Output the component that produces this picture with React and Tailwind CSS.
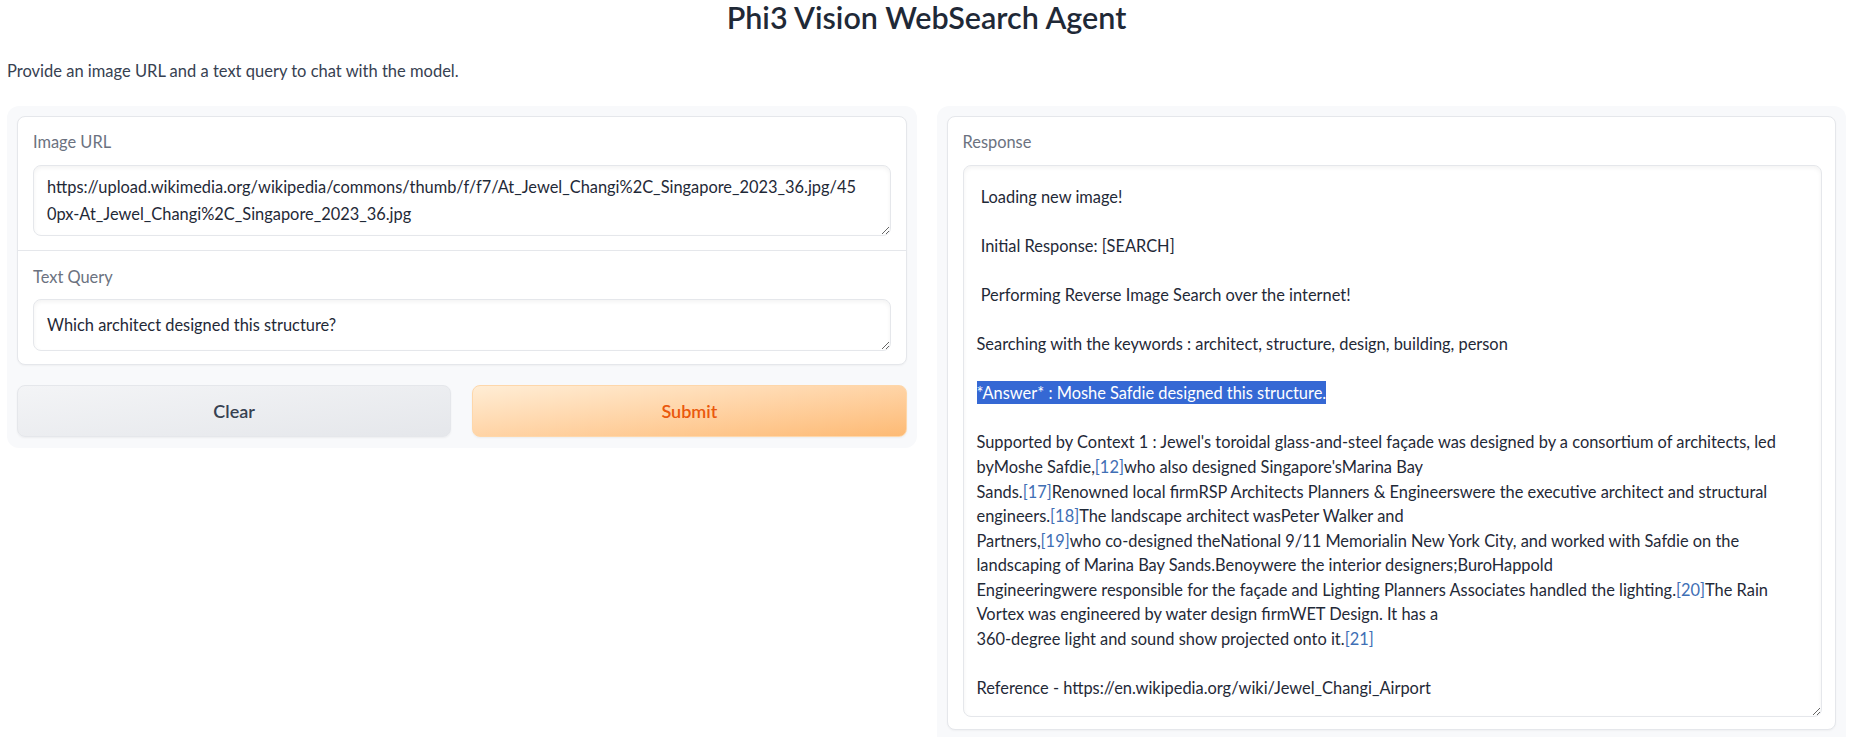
import React from "react";

const Cite = ({ children }) => <span className="text-[#3f6fb5]">{children}</span>;

export default function App() {
  const font = "font-['Lato','Liberation_Sans',sans-serif]";
  return (
    <div className={`min-h-screen bg-white ${font} text-[#1f2937]`}>
      <h1 className="h-[34px] text-center text-[30.5px] font-semibold leading-[34px] text-[#1f2937]">
        Phi3 Vision WebSearch Agent
      </h1>
      <p className="mt-[26px] px-[7px] text-[16.5px] leading-[22px] text-[#374151]">
        Provide an image URL and a text query to chat with the model.
      </p>
      <div className="mt-[24px] grid grid-cols-2 items-start gap-[20px] px-[7px]">
        {/* Left panel */}
        <div className="rounded-[12px] bg-[#f8f9fb] p-[10px] pb-[11px]">
          <div className="rounded-[8px] border border-[#e5e7eb] bg-white shadow-[0_1px_2px_rgba(0,0,0,0.04)]">
            <div className="border-b border-[#e5e7eb] px-[15px] pt-[15px] pb-[14px]">
              <div className="mb-[13px] text-[16.4px] leading-[20px] text-[#6b7280]">Image URL</div>
              <textarea
                readOnly
                value={"https://upload.wikimedia.org/wikipedia/commons/thumb/f/f7/At_Jewel_Changi%2C_Singapore_2023_36.jpg/45\n0px-At_Jewel_Changi%2C_Singapore_2023_36.jpg"}
                className="block h-[71px] w-full resize-y overflow-hidden whitespace-pre rounded-[8px] border border-[#e5e7eb] bg-white px-[13px] pt-[7px] text-[16.4px] leading-[27px] text-[#1f2937] shadow-[inset_0_2px_4px_0_rgba(0,0,0,0.05)] outline-none"
              />
            </div>
            <div className="px-[15px] pt-[16px] pb-[13px]">
              <div className="mb-[12px] text-[16.4px] leading-[20px] text-[#6b7280]">Text Query</div>
              <textarea
                readOnly
                value="Which architect designed this structure?"
                className="block h-[52px] w-full resize-y overflow-hidden whitespace-pre rounded-[8px] border border-[#e5e7eb] bg-white px-[13px] pt-[11px] text-[16.4px] leading-[27px] text-[#1f2937] shadow-[inset_0_2px_4px_0_rgba(0,0,0,0.05)] outline-none"
              />
            </div>
          </div>
          <div className="mt-[20px] grid grid-cols-2 gap-[21px]">
            <button className="h-[52px] rounded-[8px] border border-[#e5e7eb] bg-gradient-to-br from-[#f3f4f6] to-[#e5e7eb] text-[18px] font-semibold text-[#374151] shadow-[0_1px_2px_rgba(0,0,0,0.05)]">
              Clear
            </button>
            <button className="h-[52px] rounded-[8px] border border-[#fed7aa] bg-gradient-to-br from-[#ffedd5] to-[#fdba74] text-[18px] font-semibold text-[#ea580c] shadow-[0_1px_2px_rgba(0,0,0,0.05)]">
              Submit
            </button>
          </div>
        </div>

        {/* Right panel */}
        <div className="rounded-[12px] bg-[#f8f9fb] p-[10px] pb-[20px]">
          <div className="rounded-[8px] border border-[#e5e7eb] bg-white pl-[15px] pr-[13px] pt-[15px] pb-[12px] shadow-[0_1px_2px_rgba(0,0,0,0.04)]">
            <div className="mb-[13px] text-[16.4px] leading-[20px] text-[#6b7280]">Response</div>
            <div className="h-[552px] resize-y overflow-hidden rounded-[8px] border border-[#e5e7eb] bg-white px-[13px] pt-[19px] text-[16.4px] leading-[24.55px] text-[#1f2937] shadow-[inset_0_2px_4px_0_rgba(0,0,0,0.05)]">
              <div className="whitespace-pre"> Loading new image!</div>
              <div className="h-[24.55px]" />
              <div className="whitespace-pre"> Initial Response: [SEARCH]</div>
              <div className="h-[24.55px]" />
              <div className="whitespace-pre"> Performing Reverse Image Search over the internet!</div>
              <div className="h-[24.55px]" />
              <div className="whitespace-nowrap">Searching with the keywords : architect, structure, design, building, person</div>
              <div className="h-[24.55px]" />
              <div className="whitespace-nowrap">
                <span className="bg-[#3568d4] py-[2px] text-white">*Answer* : Moshe Safdie designed this structure.</span>
              </div>
              <div className="h-[24.55px]" />
              <div className="whitespace-nowrap">Supported by Context 1 : Jewel's toroidal glass-and-steel façade was designed by a consortium of architects, led</div>
              <div className="whitespace-nowrap">byMoshe Safdie,<Cite>[12]</Cite>who also designed Singapore'sMarina Bay</div>
              <div className="whitespace-nowrap">Sands.<Cite>[17]</Cite>Renowned local firmRSP Architects Planners &amp; Engineerswere the executive architect and structural</div>
              <div className="whitespace-nowrap">engineers.<Cite>[18]</Cite>The landscape architect wasPeter Walker and</div>
              <div className="whitespace-nowrap">Partners,<Cite>[19]</Cite>who co-designed theNational 9/11 Memorialin New York City, and worked with Safdie on the</div>
              <div className="whitespace-nowrap">landscaping of Marina Bay Sands.Benoywere the interior designers;BuroHappold</div>
              <div className="whitespace-nowrap">Engineeringwere responsible for the façade and Lighting Planners Associates handled the lighting.<Cite>[20]</Cite>The Rain</div>
              <div className="whitespace-nowrap">Vortex was engineered by water design firmWET Design. It has a</div>
              <div className="whitespace-nowrap">360-degree light and sound show projected onto it.<Cite>[21]</Cite></div>
              <div className="h-[24.55px]" />
              <div className="whitespace-nowrap">Reference - https://en.wikipedia.org/wiki/Jewel_Changi_Airport</div>
            </div>
          </div>
        </div>
      </div>
    </div>
  );
}
